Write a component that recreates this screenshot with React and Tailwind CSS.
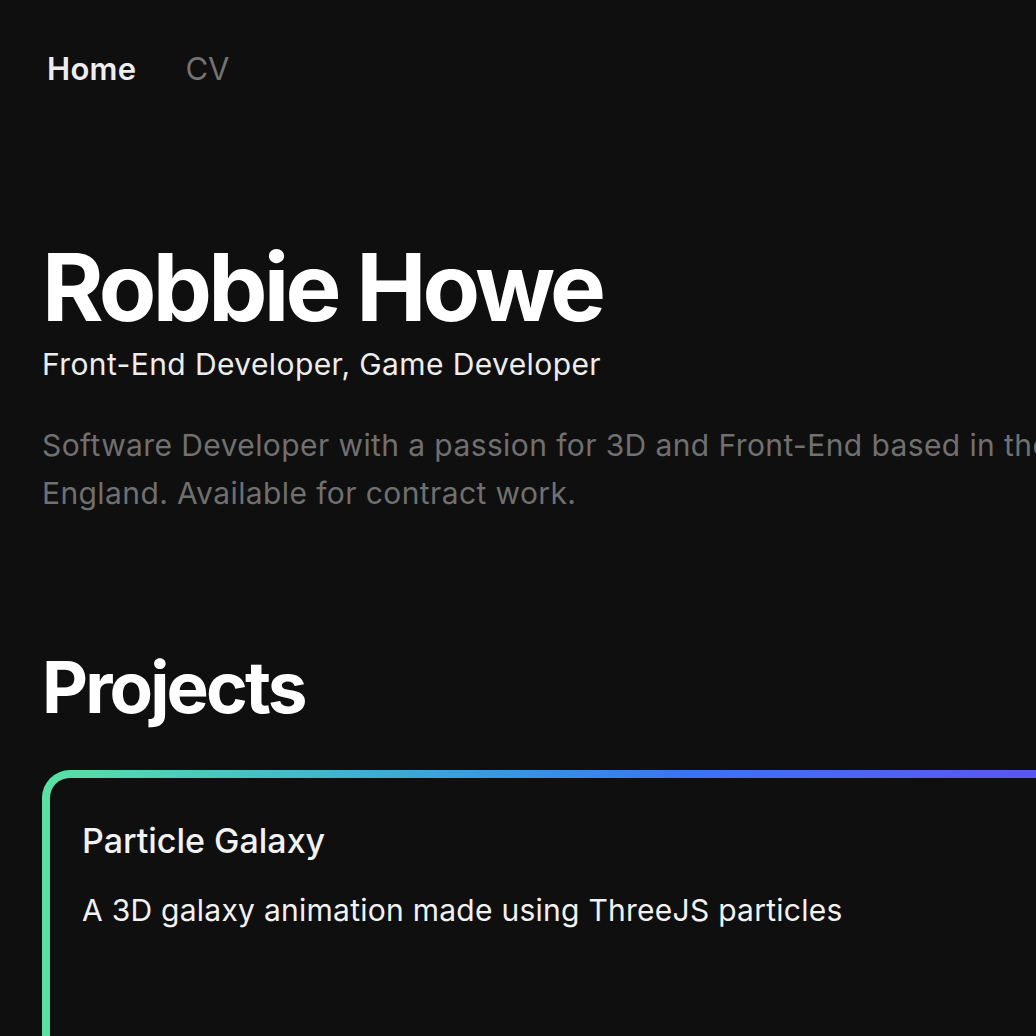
export default function App() {
  return (
    <div
      className="h-[1036px] w-[1036px] overflow-hidden bg-[#0f0f0f] text-white"
      style={{ fontFamily: "Inter, 'Noto Sans', sans-serif" }}
    >
      <div className="w-[1400px] px-[42px]">
        <nav className="flex gap-[49px] pt-[48px] pl-[5px] text-[31px] leading-[42px]">
          <a className="font-semibold tracking-[0.3px] text-[#ededed]">Home</a>
          <a className="text-[#737373]">CV</a>
        </nav>

        <header className="mt-[149px]">
          <h1 className="text-[94px] font-bold leading-[96px] tracking-[-0.04em]">Robbie Howe</h1>
          <p className="mt-[9px] text-[30px] leading-[40px] tracking-[0.4px] text-[#ededed]">
            Front-End Developer, Game Developer
          </p>
          <p className="mt-[37px] text-[30px] leading-[48px] tracking-[0.4px] text-[#707070]">
            Software Developer with a passion for 3D and Front-End based in the North East of
            <br />
            England. Available for contract work.
          </p>
        </header>

        <section className="mt-[130px]">
          <h2 className="text-[71px] font-bold leading-[80px] tracking-[-0.04em]">Projects</h2>
          <div className="mt-[43px] w-[1300px] rounded-[28px] bg-gradient-to-r from-[#5ae2a2] via-[#3a72f4] to-[#6a35ee] p-[8px]">
            <div className="h-[400px] rounded-[20px] bg-[#0f0f0f] px-[32px] pt-[43px]">
              <h3 className="text-[34px] font-medium leading-[40px] text-[#f2f2f2]">Particle Galaxy</h3>
              <p className="mt-[29px] text-[30px] leading-[40px] tracking-[0.26px] text-[#f2f2f2]">
                A 3D galaxy animation made using ThreeJS particles
              </p>
            </div>
          </div>
        </section>
      </div>
    </div>
  );
}
